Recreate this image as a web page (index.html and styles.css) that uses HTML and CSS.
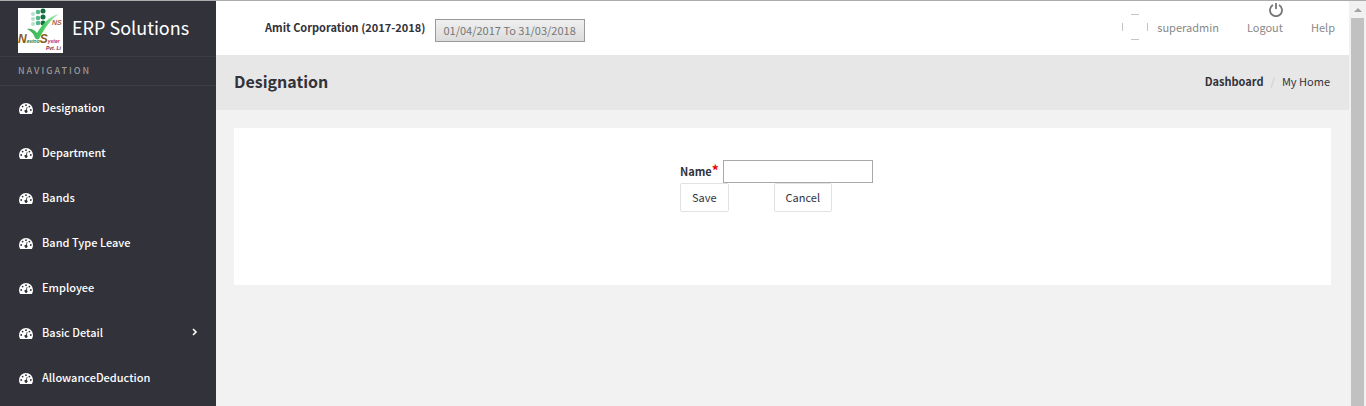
FILE: index.html
```
<!DOCTYPE html>
<html lang="en">
<head>
    <meta charset="UTF-8">
    <meta name="viewport" content="width=device-width, initial-scale=1.0">
    <title>ERP Solutions</title>
    <link rel="stylesheet" href="styles.css">
</head>
<body>
    <!-- shared icon -->
    <svg width="0" height="0" class="defs" aria-hidden="true">
        <symbol id="gauge" viewBox="0 0 14 12">
            <path fill="#fff" d="M7 1a7 7 0 0 0-7 7c0 1.3.4 2.6 1 3.7.1.2.3.3.5.3h11c.2 0 .4-.1.5-.3.7-1.1 1-2.4 1-3.7a7 7 0 0 0-7-7z"/>
            <g fill="#32323a">
                <circle cx="2.2" cy="8" r=".9"/>
                <circle cx="3.6" cy="4.6" r=".9"/>
                <circle cx="7" cy="3.2" r=".9"/>
                <circle cx="10.4" cy="4.6" r=".9"/>
                <circle cx="11.8" cy="8" r=".9"/>
                <path d="M7.8 4.8l.7.2-.7 3a1.5 1.5 0 1 1-.8-.2z"/>
            </g>
        </symbol>
    </svg>
    <div class="page">
        <aside class="sidebar">
            <div class="brand">
                <svg class="logo" viewBox="0 0 45 45" aria-hidden="true">
                    <defs>
                        <linearGradient id="tick" x1="0" x2="1" y1="0" y2="0">
                            <stop offset="0" stop-color="#3fae58"/>
                            <stop offset=".5" stop-color="#45cc60"/>
                            <stop offset="1" stop-color="#c4e8ca"/>
                        </linearGradient>
                    </defs>
                    <rect width="45" height="45" fill="#fff"/>
                    <g fill="#b5e0cc">
                        <circle cx="15" cy="6" r="2"/><circle cx="15" cy="11" r="2"/><circle cx="15" cy="16" r="2"/>
                    </g>
                    <g fill="#58b58c">
                        <circle cx="20" cy="4" r="2.3"/><circle cx="20" cy="10" r="2.3"/><circle cx="20" cy="15" r="2.3"/>
                    </g>
                    <g fill="#11713f">
                        <circle cx="25" cy="3" r="2.5"/><circle cx="25" cy="9" r="2.5"/><circle cx="25" cy="15" r="2.5"/>
                    </g>
                    <path fill="url(#tick)" d="M9 21c4-1 8 1 10 4C24 17 31 8 41 6 32 12 26 21 21 31c-2 1-3 0-4-1-1-4-4-7-8-9z"/>
                    <text x="34" y="17" class="logo-ns">NS</text>
                    <text x="0" y="35" class="logo-name"><tspan class="big">N</tspan><tspan class="green">evino</tspan><tspan class="big">S</tspan><tspan class="red">yster</tspan></text>
                    <text x="28" y="42" class="logo-pvt">Pvt. Li</text>
                </svg>
                <span class="brand-name">ERP Solutions</span>
            </div>
            <div class="nav-title">NAVIGATION</div>
            <nav class="menu">
                <a href="#"><svg class="gauge"><use href="#gauge"/></svg>Designation</a>
                <a href="#"><svg class="gauge"><use href="#gauge"/></svg>Department</a>
                <a href="#"><svg class="gauge"><use href="#gauge"/></svg>Bands</a>
                <a href="#"><svg class="gauge"><use href="#gauge"/></svg>Band Type Leave</a>
                <a href="#"><svg class="gauge"><use href="#gauge"/></svg>Employee</a>
                <a href="#"><svg class="gauge"><use href="#gauge"/></svg>Basic Detail
                    <svg class="arrow" viewBox="0 0 6 8"><path d="M1 1l3 3-3 3" fill="none" stroke="#fff" stroke-width="1.6"/></svg>
                </a>
                <a href="#"><svg class="gauge"><use href="#gauge"/></svg>AllowanceDeduction</a>
            </nav>
        </aside>

        <div class="main">
            <header class="topbar">
                <label class="company" for="period">Amit Corporation (2017-2018)</label>
                <input class="period" id="period" type="text" value="01/04/2017 To 31/03/2018" readonly>
                <div class="user-links">
                    <a href="#" class="user">
                        <svg class="avatar" viewBox="0 0 26 26"><path d="M9 .5h8M9 25.5h8M.5 9v8M25.5 9v8" fill="none" stroke="#c4c4c4"/></svg>
                        superadmin
                    </a>
                    <a href="#" class="logout">
                        <svg class="power" viewBox="0 0 14 15"><path d="M4 3a6 6 0 1 0 6 0M7 1v6" fill="none" stroke="#777" stroke-width="1.8"/></svg>
                        Logout
                    </a>
                    <a href="#">Help</a>
                </div>
            </header>

            <div class="page-head">
                <h1>Designation</h1>
                <div class="breadcrumb">
                    <a href="#" class="current">Dashboard</a>
                    <span class="slash">/</span>
                    <a href="#">My Home</a>
                </div>
            </div>

            <div class="card">
                <form class="name-form">
                    <div class="field">
                        <label for="name">Name<span class="required">*</span></label>
                        <input type="text" id="name">
                    </div>
                    <div class="buttons">
                        <button type="button">Save</button>
                        <button type="button">Cancel</button>
                    </div>
                </form>
            </div>
        </div>

        <div class="scrollbar" aria-hidden="true">
            <div class="scroll-up"></div>
            <div class="thumb"></div>
        </div>
    </div>
</body>
</html>
```
FILE: styles.css
```
* {
    box-sizing: border-box;
}
body {
    margin: 0;
    font-family: "Noto Sans CJK SC", "Noto Sans", sans-serif;
    font-size: 11px;
    line-height: 20px;
    color: #32323a;
    background: #f2f2f2;
}
a {
    color: inherit;
    text-decoration: none;
}
input, button {
    font-family: inherit;
    font-size: 11px;
}
.defs {
    position: absolute;
}
.page {
    display: flex;
    min-height: 100vh;
    border-top: 1px solid #acacac;
}

/* sidebar */
.sidebar {
    width: 216px;
    flex-shrink: 0;
    background: #32323a;
    color: #fff;
}
.brand {
    display: flex;
    gap: 9px;
    height: 56px;
    padding: 7px 18px 0;
    border-bottom: 1px solid #3d3d46;
}
.logo {
    width: 45px;
    height: 45px;
    flex-shrink: 0;
}
.logo text {
    font-family: "Liberation Sans", sans-serif;
    font-style: italic;
    font-weight: bold;
}
.logo .logo-ns {
    font-size: 7px;
    fill: #b0603a;
}
.logo .logo-name {
    font-size: 5px;
}
.logo .big {
    font-size: 12px;
    fill: #8a5a20;
}
.logo .green {
    fill: #2f7a3c;
}
.logo .red {
    fill: #b82f55;
}
.logo .logo-pvt {
    font-size: 5px;
    fill: #7d2348;
}
.brand-name {
    font-size: 18px;
    line-height: 38px;
}
.nav-title {
    height: 29px;
    padding-left: 18px;
    border-bottom: 1px solid #3d3d46;
    font-size: 9px;
    font-weight: 500;
    line-height: 28px;
    letter-spacing: 2px;
    color: #999;
}
.menu a {
    display: flex;
    align-items: center;
    height: 45px;
    padding: 0 18px 4px;
    font-weight: 500;
}
.gauge {
    width: 14px;
    height: 12px;
    margin: 2px 9px 0 1px;
}
.arrow {
    width: 6px;
    height: 8px;
    margin-left: auto;
}

/* header */
.main {
    flex: 1;
}
.topbar {
    display: flex;
    align-items: center;
    height: 54px;
    padding: 0 14px 2px 49px;
    background: #fff;
}
.company {
    font-weight: bold;
}
.period {
    width: 150px;
    height: 23px;
    margin: 6px 0 0 10px;
    padding: 0 7px;
    border: 1px solid #999;
    background: linear-gradient(#f0f0f0, #dcdcdc);
    color: #777;
}
.user-links {
    display: flex;
    gap: 28px;
    margin-left: auto;
    color: #888;
}
.user {
    display: flex;
    align-items: center;
    gap: 9px;
}
.avatar {
    width: 26px;
    height: 26px;
    margin: -3px 0;
}
.logout {
    position: relative;
}
.power {
    position: absolute;
    right: 0;
    bottom: 20px;
    width: 14px;
    height: 15px;
}
.page-head {
    display: flex;
    align-items: center;
    justify-content: space-between;
    height: 55px;
    padding: 0 19px 3px 18px;
    background: #e7e7e7;
}
h1 {
    margin: 0;
    font-size: 16px;
    font-weight: bold;
}
.breadcrumb {
    display: flex;
    gap: 7px;
}
.current {
    font-weight: bold;
}
.slash {
    color: #ccc;
}

/* form */
.card {
    display: flex;
    justify-content: center;
    min-height: 157px;
    margin: 18px;
    padding: 32px 12px 32px 0;
    background: #fff;
}
.field {
    display: flex;
    justify-content: space-between;
}
.name-form {
    width: 193px;
}
.field label {
    font-weight: bold;
    line-height: 23px;
}
.required {
    font-size: 14px;
    line-height: 20px;
    color: #e00;
}
.field input {
    width: 150px;
    height: 23px;
    border: 1px solid #a9a9a9;
    background: #fff;
}
.buttons {
    display: flex;
    gap: 45px;
}
.buttons button {
    height: 29px;
    padding: 0 11px 2px;
    border: 1px solid #e2e2e2;
    border-radius: 2px;
    background: #fff;
    color: #32323a;
}

/* scrollbar */
.scrollbar {
    width: 17px;
    display: flex;
    flex-direction: column;
    padding: 0 2px;
    background: #f1f1f1;
}
.scroll-up {
    width: 0;
    margin: 7px auto 6px;
    border: 4px solid transparent;
    border-top: 0;
    border-bottom-color: #a3a3a3;
}
.thumb {
    flex: 1;
    background: #c1c1c1;
}
```
